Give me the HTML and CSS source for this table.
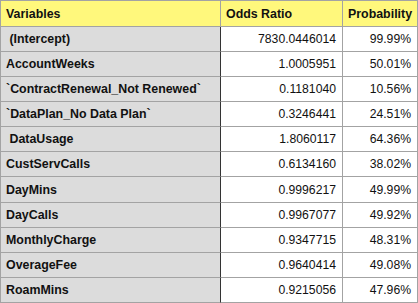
FILE: index.html
```html
<!DOCTYPE html>
<html>
<head>
<meta charset="utf-8">
<link rel="stylesheet" href="styles.css">
</head>
<body>
<table class="odds">
  <thead>
    <tr>
      <th class="c-var">Variables</th>
      <th class="c-or">Odds Ratio</th>
      <th class="c-p">Probability</th>
    </tr>
  </thead>
  <tbody>
    <tr><td class="name"> (Intercept)</td><td class="num">7830.0446014</td><td class="num">99.99%</td></tr>
    <tr><td class="name">AccountWeeks</td><td class="num">1.0005951</td><td class="num">50.01%</td></tr>
    <tr><td class="name">`ContractRenewal_Not Renewed`</td><td class="num">0.1181040</td><td class="num">10.56%</td></tr>
    <tr><td class="name">`DataPlan_No Data Plan`</td><td class="num">0.3246441</td><td class="num">24.51%</td></tr>
    <tr><td class="name"> DataUsage</td><td class="num">1.8060117</td><td class="num">64.36%</td></tr>
    <tr><td class="name">CustServCalls</td><td class="num">0.6134160</td><td class="num">38.02%</td></tr>
    <tr><td class="name">DayMins</td><td class="num">0.9996217</td><td class="num">49.99%</td></tr>
    <tr><td class="name">DayCalls</td><td class="num">0.9967077</td><td class="num">49.92%</td></tr>
    <tr><td class="name">MonthlyCharge</td><td class="num">0.9347715</td><td class="num">48.31%</td></tr>
    <tr><td class="name">OverageFee</td><td class="num">0.9640414</td><td class="num">49.08%</td></tr>
    <tr><td class="name">RoamMins</td><td class="num">0.9215056</td><td class="num">47.96%</td></tr>
  </tbody>
</table>
</body>
</html>
```

FILE: styles.css
```css
html, body {
  margin: 0;
  padding: 0;
  background: #ffffff;
}

.odds {
  border-collapse: separate;
  border-spacing: 0;
  border-top: 1px solid #a3a3a3;
  border-left: 1px solid #a3a3a3;
  font-family: "Liberation Sans", Arial, Helvetica, sans-serif;
  font-size: 12.2px;
  color: #111111;
  table-layout: fixed;
  width: 418px;
}

.odds th,
.odds td {
  border-right: 1px solid #a3a3a3;
  border-bottom: 1px solid #a3a3a3;
  padding: 0 5px;
  vertical-align: middle;
  white-space: pre;
  box-sizing: border-box;
  overflow: hidden;
}

.odds th {
  background: #fff87c;
  font-weight: bold;
  font-size: 12.4px;
  text-align: left;
  height: 26px;
}

.odds td {
  height: 25.09px;
}

.c-var { width: 220px; }
.c-or { width: 122px; }
.c-p { width: 75px; }

.odds td.name {
  background: #dcdcdc;
  font-weight: bold;
  font-size: 12.4px;
  border-right-color: #333333;
}

.odds td.num {
  text-align: right;
  padding-right: 6px;
}
```
